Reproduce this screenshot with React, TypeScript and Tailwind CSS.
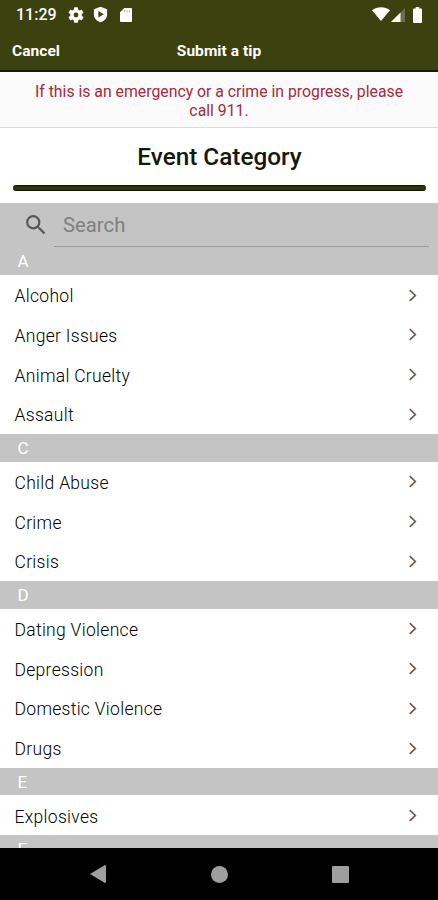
import { useState } from 'react';

interface Section {
  letter: string;
  items: string[];
}

const sections: Section[] = [
  { letter: 'A', items: ['Alcohol', 'Anger Issues', 'Animal Cruelty', 'Assault'] },
  { letter: 'C', items: ['Child Abuse', 'Crime', 'Crisis'] },
  { letter: 'D', items: ['Dating Violence', 'Depression', 'Domestic Violence', 'Drugs'] },
  { letter: 'E', items: ['Explosives'] },
  { letter: 'F', items: [] },
];

function StatusBar() {
  return (
    <div className="flex h-[29px] items-center pl-4 pr-[15px] text-white">
      <span className="w-[52px] text-[16px] font-medium leading-none">11:29</span>
      <svg className="h-4 w-4" viewBox="2 2 20 20" fill="currentColor">
        <path d="M19.14 12.94c.04-.3.06-.61.06-.94s-.02-.64-.07-.94l2.03-1.58a.49.49 0 0 0 .12-.61l-1.92-3.32a.49.49 0 0 0-.59-.22l-2.39.96a7 7 0 0 0-1.62-.94l-.36-2.54a.48.48 0 0 0-.48-.41h-3.84a.48.48 0 0 0-.47.41l-.36 2.54c-.59.24-1.13.57-1.62.94l-2.39-.96a.48.48 0 0 0-.59.22L2.74 8.87a.47.47 0 0 0 .12.61l2.03 1.58a6 6 0 0 0 0 1.88l-2.03 1.58a.49.49 0 0 0-.12.61l1.92 3.32c.12.22.37.29.59.22l2.39-.96c.5.38 1.03.7 1.62.94l.36 2.54c.05.24.24.41.48.41h3.84c.24 0 .44-.17.47-.41l.36-2.54a7 7 0 0 0 1.62-.94l2.39.96c.22.08.47 0 .59-.22l1.92-3.32a.47.47 0 0 0-.12-.61zM12 15a3 3 0 1 1 0-6 3 3 0 0 1 0 6" />
      </svg>
      <svg className="ml-[9px] h-[17px] w-[15px]" viewBox="0 0 14 17">
        <path d="M7 .8 13.6 3.2v5.2c0 3.6-2.7 6.4-6.6 7.8C3.1 14.8.4 12 .4 8.4V3.2z" fill="currentColor" />
        <path d="M4.900 5v6.600L10.300 8.300z" fill="#3b410f" />
      </svg>
      <svg className="ml-[12px] h-[14px] w-[12px]" viewBox="0 0 12 14">
        <path d="M4.300 0H11a1 1 0 0 1 1 1v12a1 1 0 0 1-1 1H1a1 1 0 0 1-1-1V4.200z" fill="currentColor" />
        <path d="M4.700 2v2.500M7 2v2.500M9.300 2v2.500" stroke="#b9bba8" strokeWidth="1" />
      </svg>
      <svg className="mb-[2px] ml-auto h-[14px] w-[18px]" viewBox="0 0 18 14">
        <path d="M0 3.200C2.500 1.200 5.500.2 9 .2s6.500 1 9 3L9 14z" fill="currentColor" />
      </svg>
      <svg className="ml-[1px] h-[14px] w-[14px]" viewBox="0 0 14 14">
        <path d="M14 0v14H0z" fill="#6c7050" />
        <path d="M9.500 4.500V14H0z" fill="currentColor" />
      </svg>
      <svg className="mr-[1px] ml-[8px] h-[16px] w-[9px]" viewBox="0 0 9 16">
        <path d="M2.700 0h3.600v1.500H8a1 1 0 0 1 1 1V15a1 1 0 0 1-1 1H1a1 1 0 0 1-1-1V2.500a1 1 0 0 1 1-1h1.700z" fill="currentColor" />
      </svg>
    </div>
  );
}

function CategoryRow({ label }: { label: string }) {
  return (
    <button className="flex h-[39.75px] w-full items-center justify-between bg-white pl-[14.5px] pr-[20px] pt-[3px] text-left">
      <span className="pt-[1.5px] text-[17.5px] font-light leading-none tracking-[0.3px] text-black">{label}</span>
      <svg className="mb-[2px] h-[13px] w-[10px]" viewBox="0 0 10 13" fill="none">
        <path d="M1.700 1.200 7.300 6.500 1.700 11.800" stroke="#6b5a50" strokeWidth="1.700" />
      </svg>
    </button>
  );
}

export default function App() {
  const [query, setQuery] = useState('');

  return (
    <div className="flex h-[900px] w-[438px] flex-col overflow-hidden bg-white font-['Roboto',sans-serif]">
      <header className="h-[72px] shrink-0 border-b-2 border-[#15180a] bg-[#3b410f]">
        <StatusBar />
        <div className="grid h-[43px] grid-cols-3 items-center px-3 pt-[2px] text-[15.5px] font-bold leading-none tracking-[0.05px] text-white">
          <button className="text-left">Cancel</button>
          <h1 className="text-center">Submit a tip</h1>
        </div>
      </header>

      <p className="h-[56px] shrink-0 border-b border-[#d9d9d9] bg-[#fbfbfb] px-7 pt-[10px] text-center text-[15.8px] leading-[19px] text-[#a52a3c]">
        If this is an emergency or a crime in progress, please call 911.
      </p>

      <div className="h-[75px] shrink-0 pl-[13px] pr-3">
        <h2 className="flex h-[57px] items-center justify-center pt-[2px] text-[24.3px] font-medium text-[#15180a]">Event Category</h2>
        <div className="h-[6px] rounded-sm border-y border-[#0f1402] bg-[#2c3606]" />
      </div>

      <div className="h-[44px] shrink-0 bg-[#c4c4c4] pl-[25px] pr-[9px]">
        <div className="flex h-full items-center">
          <svg className="h-[22px] w-[22px]" viewBox="2 2 20 20" fill="#555555">
            <path d="M15.500 14h-.79l-.28-.27A6.470 6.470 0 0 0 16 9.500 6.500 6.500 0 1 0 9.500 16c1.610 0 3.090-.59 4.230-1.570l.27.28v.79l5 4.990L20.490 19zm-6 0C7.010 14 5 11.990 5 9.500S7.010 5 9.500 5 14 7.010 14 9.500 11.990 14 9.500 14" />
          </svg>
          <input
            className="ml-[7px] h-[43px] min-w-0 flex-1 border-b border-[#999999] pl-[9px] text-[20.3px] text-[#555555] outline-none placeholder:text-[#808080]"
            placeholder="Search"
            value={query}
            onChange={(e) => setQuery(e.target.value)}
          />
        </div>
      </div>

      <main className="min-h-0 flex-1 overflow-hidden">
        {sections.map((section) => (
          <section key={section.letter}>
            <h3 className="flex h-[27.75px] items-center bg-[#c4c4c4] pl-[17.5px] pt-[2px] text-[17px] leading-none text-white">{section.letter}</h3>
            {section.items.map((item) => (
              <CategoryRow key={item} label={item} />
            ))}
          </section>
        ))}
      </main>

      <nav className="grid h-[52px] shrink-0 grid-cols-3 items-center bg-black pl-[39px] pr-[37px]">
        <svg className="mx-auto h-[18px] w-[16px] -translate-x-px" viewBox="0 0 16 18">
          <path d="M0 9 15 0q1 0 1 1v16q0 1-1 1z" fill="#9e9e9e" />
        </svg>
        <div className="mx-auto h-[17px] w-[17px] rounded-full bg-[#9e9e9e]" />
        <div className="mx-auto h-[17px] w-[17px] rounded-[1px] bg-[#9e9e9e]" />
      </nav>
    </div>
  );
}
